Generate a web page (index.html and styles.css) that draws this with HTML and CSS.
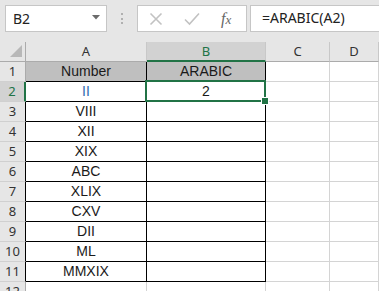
FILE: index.html
```html
<!DOCTYPE html>
<html>
<head>
<meta charset="utf-8">
<link rel="stylesheet" href="styles.css">
</head>
<body>
<div class="toolbar">
  <div class="namebox">
    <span class="nb-text">B2</span>
    <svg class="caret" width="8" height="5" viewBox="0 0 8 5"><path d="M0 0H8L4 4.5Z" fill="#6b6b6b"/></svg>
  </div>
  <div class="dots"><i></i><i></i><i></i></div>
  <div class="fnbox">
    <svg class="ico" width="14" height="14" viewBox="0 0 14 14"><path d="M1.5 1.5L12.5 12.5M12.5 1.5L1.5 12.5" stroke="#c2c2c2" stroke-width="1.6" fill="none"/></svg>
    <svg class="ico" width="16" height="14" viewBox="0 0 16 14"><path d="M1 7.5L5.5 12L15 1.5" stroke="#c2c2c2" stroke-width="1.6" fill="none"/></svg>
    <span class="fx">f<span class="fx-x">x</span></span>
  </div>
  <div class="formula">=ARABIC(A2)</div>
</div>
<div class="sheet">
  <div class="corner"><span class="tri"></span></div>
  <div class="colhead">A</div>
  <div class="colhead sel">B</div>
  <div class="colhead">C</div>
  <div class="colhead">D</div>

  <div class="rowhead">1</div>
  <div class="cell tb head">Number</div>
  <div class="cell tb head">ARABIC</div>
  <div class="cell"></div><div class="cell"></div>

  <div class="rowhead sel">2</div>
  <div class="cell tb blue">II</div>
  <div class="cell tb active">2<span class="selbox"><span class="handle"></span></span></div>
  <div class="cell"></div><div class="cell"></div>

  <div class="rowhead edge">3</div>
  <div class="cell tb">VIII</div><div class="cell tb"></div>
  <div class="cell"></div><div class="cell"></div>

  <div class="rowhead edge">4</div>
  <div class="cell tb">XII</div><div class="cell tb"></div>
  <div class="cell"></div><div class="cell"></div>

  <div class="rowhead edge">5</div>
  <div class="cell tb">XIX</div><div class="cell tb"></div>
  <div class="cell"></div><div class="cell"></div>

  <div class="rowhead edge">6</div>
  <div class="cell tb">ABC</div><div class="cell tb"></div>
  <div class="cell"></div><div class="cell"></div>

  <div class="rowhead edge">7</div>
  <div class="cell tb">XLIX</div><div class="cell tb"></div>
  <div class="cell"></div><div class="cell"></div>

  <div class="rowhead edge">8</div>
  <div class="cell tb">CXV</div><div class="cell tb"></div>
  <div class="cell"></div><div class="cell"></div>

  <div class="rowhead edge">9</div>
  <div class="cell tb">DII</div><div class="cell tb"></div>
  <div class="cell"></div><div class="cell"></div>

  <div class="rowhead edge">10</div>
  <div class="cell tb">ML</div><div class="cell tb"></div>
  <div class="cell"></div><div class="cell"></div>

  <div class="rowhead edge">11</div>
  <div class="cell tb">MMXIX</div><div class="cell tb"></div>
  <div class="cell"></div><div class="cell"></div>

  <div class="rowhead">12</div>
  <div class="cell"></div><div class="cell"></div>
  <div class="cell"></div><div class="cell"></div>
</div>
</body>
</html>
```
FILE: styles.css
```css
html, body {
  margin: 0;
  padding: 0;
  background: #ffffff;
  overflow: hidden;
}
body {
  width: 379px;
  height: 291px;
  font-family: "Liberation Sans", Arial, sans-serif;
}
.toolbar {
  height: 42px;
  box-sizing: border-box;
  background: #e6e6e6;
  padding: 5px 0 0 5px;
  display: flex;
  align-items: flex-start;
}
.namebox {
  width: 102px;
  height: 27px;
  box-sizing: border-box;
  background: #fff;
  border: 1px solid #c6c6c6;
  display: flex;
  align-items: center;
  justify-content: space-between;
  padding: 0 6px 0 7px;
}
.nb-text {
  font-family: "Noto Sans", sans-serif;
  font-size: 14px;
  color: #222;
}
.caret { margin-top: -2px; }
.dots {
  width: 30px;
  height: 27px;
  display: flex;
  flex-direction: column;
  align-items: center;
  justify-content: center;
  gap: 2.5px;
}
.dots i {
  display: block;
  width: 2px;
  height: 2px;
  background: #b0b0b0;
}
.fnbox {
  width: 110px;
  height: 27px;
  box-sizing: border-box;
  margin-left: 0;
  background: #fff;
  border: 1px solid #c6c6c6;
  display: flex;
  align-items: center;
  padding-left: 11px;
  gap: 21px;
}
.fx {
  font-family: "Liberation Serif", serif;
  font-style: italic;
  font-size: 16px;
  color: #666;
  margin-left: 0;
}
.fx-x { font-size: 13px; }
.formula {
  flex: 1;
  height: 27px;
  box-sizing: border-box;
  margin-left: 3px;
  background: #fff;
  border: 1px solid #c6c6c6;
  border-right: none;
  padding-left: 11px;
  font-family: "Noto Sans", sans-serif;
  font-size: 14px;
  line-height: 24px;
  color: #222;
}
.sheet {
  display: grid;
  grid-template-columns: 26px 121px 119px 64px 1fr;
  grid-template-rows: repeat(13, 20px);
  background: #fff;
}
.sheet > div {
  box-sizing: border-box;
  border-right: 1px solid #d4d4d4;
  border-bottom: 1px solid #d4d4d4;
}
.corner {
  background: #e6e6e6;
  position: relative;
  border-right-color: #ababab !important;
  border-bottom-color: #ababab !important;
}
.tri {
  position: absolute;
  right: 3px;
  bottom: 4px;
  width: 0;
  height: 0;
  border-left: 12px solid transparent;
  border-bottom: 12px solid #b8b8b8;
}
.colhead {
  background: #e6e6e6;
  border-right-color: #c8c8c8 !important;
  border-bottom-color: #ababab !important;
  text-align: center;
  font-family: "Noto Sans", sans-serif;
  font-size: 13px;
  line-height: 19px;
  color: #333;
}
.colhead.sel {
  background: #d2d2d2;
  color: #217346;
  border-bottom: 2px solid #217346 !important;
  line-height: 18px;
}
.rowhead {
  background: #e6e6e6;
  border-right-color: #ababab !important;
  border-bottom-color: #d0d0d0 !important;
  text-align: center;
  font-family: "Noto Sans", sans-serif;
  font-size: 13px;
  line-height: 19px;
  color: #333;
}
.rowhead.edge { border-right-color: #000 !important; }
.rowhead.sel {
  background: #d2d2d2;
  color: #217346;
  border-right: 2px solid #217346 !important;
}
.cell {
  text-align: center;
  font-size: 14px;
  line-height: 19px;
  color: #1a1a1a;
  white-space: nowrap;
}
.cell.tb {
  border-right-color: #000;
  border-bottom-color: #000;
}
.cell.head { background: #bfbfbf; }
.cell.blue { color: #2f6cb1; }
.cell.active { position: relative; }
.selbox {
  position: absolute;
  left: -2px;
  top: -2px;
  width: 121px;
  height: 22px;
  box-sizing: border-box;
  border: 2px solid #217346;
}
.handle {
  position: absolute;
  right: -4px;
  bottom: -4px;
  width: 6px;
  height: 6px;
  background: #217346;
  outline: 1px solid #fff;
}
```
